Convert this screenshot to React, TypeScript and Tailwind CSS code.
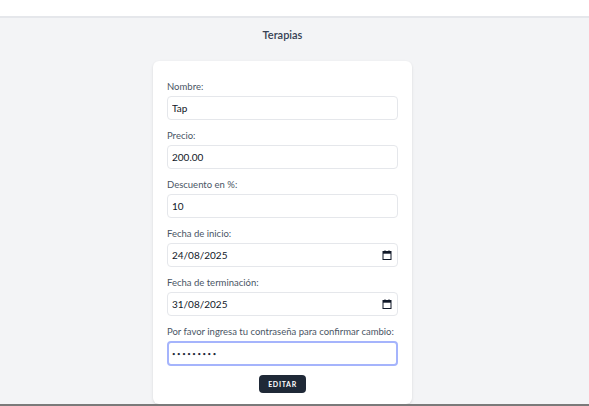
import React from 'react';

const font = { fontFamily: 'Lato, "Noto Sans", sans-serif' };

const CalendarIcon: React.FC = () => (
  <svg width="10" height="10" viewBox="0 0 10 10" className="absolute right-[6px] top-1/2 -translate-y-1/2 text-gray-900">
    <rect x="1" y="1.5" width="8" height="8" fill="none" stroke="currentColor" strokeWidth="1" />
    <rect x="1" y="1.5" width="8" height="2.2" fill="currentColor" />
    <rect x="2.5" y="0.3" width="1" height="1.6" fill="currentColor" />
    <rect x="6.5" y="0.3" width="1" height="1.6" fill="currentColor" />
  </svg>
);

type FieldProps = { label: string; value: string; date?: boolean; type?: string; focused?: boolean };

const Field: React.FC<FieldProps> = ({ label, value, date, type = 'text', focused }) => (
  <div className="mb-[9px]">
    <label className="block text-[9.5px] leading-[14px] text-gray-600 mb-[2px] whitespace-nowrap">{label}</label>
    <div className="relative">
      <input
        type={type}
        readOnly
        value={value}
        className={
          focused
            ? 'block w-full h-[25px] rounded-[4px] border-2 border-[#a5b4fc] bg-white px-[3px] text-[6px] tracking-[1.6px] text-gray-800 outline-none'
            : 'block w-full h-[24px] rounded-[4px] border border-gray-200 bg-white px-[4px] text-[10px] text-gray-900 outline-none'
        }
        style={font}
      />
      {date && <CalendarIcon />}
    </div>
  </div>
);

export default function App() {
  return (
    <div className="h-[406px] flex flex-col bg-[#f3f4f6] overflow-hidden" style={font}>
      <div className="h-[18px] shrink-0 bg-white border-b-2 border-gray-200" />

      <div className="flex-1 w-[565px] flex flex-col items-center">
        <h2 className="mt-[10px] text-[11px] leading-[14px] font-semibold text-gray-700">Terapias</h2>

        <div className="mt-[19px] w-[259px] flex-1 bg-white rounded-[6px] shadow-sm px-[14px] pt-[19px]">
          <Field label="Nombre:" value="Tap" />
          <Field label="Precio:" value="200.00" />
          <Field label="Descuento en %:" value="10" />
          <Field label="Fecha de inicio:" value="24/08/2025" date />
          <Field label="Fecha de terminación:" value="31/08/2025" date />
          <Field
            label="Por favor ingresa tu contraseña para confirmar cambio:"
            value="123456789"
            type="password"
            focused
          />
          <div className="flex justify-center">
            <button className="w-[47px] h-[18px] rounded-[4px] bg-[#1f2937] text-white text-[7px] font-bold tracking-widest">
              EDITAR
            </button>
          </div>
        </div>
      </div>

      <div className="h-[2px] shrink-0 bg-[#7a7a7a]" />
    </div>
  );
}
